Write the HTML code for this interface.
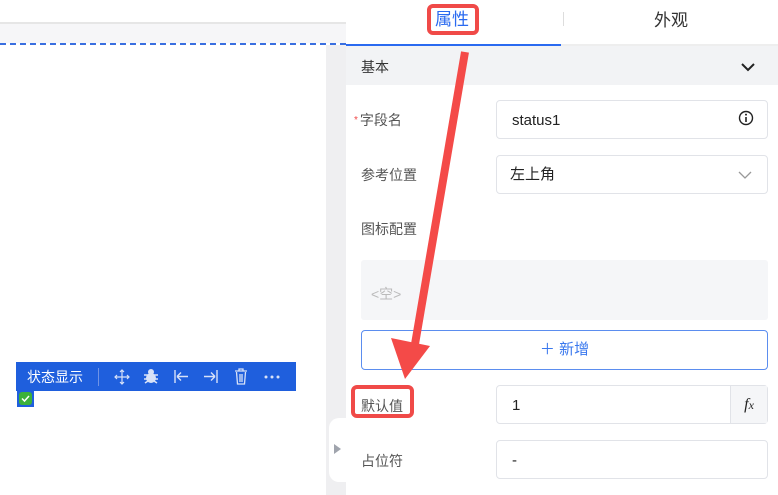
<!DOCTYPE html>
<html><head><meta charset="utf-8"><style>
*{margin:0;padding:0;box-sizing:border-box}
body{width:778px;height:495px;overflow:hidden;background:#fff;position:relative;font-family:"Liberation Sans","Noto Sans CJK SC",sans-serif;font-size:14px;color:#333}
.a{position:absolute}
.inp{position:absolute;left:496px;width:272px;height:39px;border:1px solid #e1e3e8;border-radius:4px;background:#fff}
.lbl{position:absolute;left:361px;color:#555;font-size:14px;line-height:18px}
</style></head><body>
<div class="a" style="left:0;top:22px;width:346px;height:2px;background:#e6e6e6"></div>
<div class="a" style="left:0;top:24px;width:346px;height:19px;background:#f6f6f8"></div>
<div class="a" style="left:0;top:43px;width:346px;height:2px;border-top:2px dashed #3a6fe0"></div>
<div class="a" style="left:326px;top:45px;width:20px;height:450px;background:#efeff1"></div>
<div class="a" style="left:329px;top:418px;width:20px;height:64px;background:#fff;border-radius:10px 0 0 10px"></div>
<div class="a" style="left:334px;top:444px;width:0;height:0;border-left:7px solid #a0a4ad;border-top:5px solid transparent;border-bottom:5px solid transparent"></div>

<div class="a" style="left:16px;top:362px;width:280px;height:29px;background:#1f5fdd;color:#fff;font-size:14px">
<span class="a" style="left:11px;top:6px;line-height:18px">状态显示</span>
<span class="a" style="left:82px;top:6px;width:1px;height:18px;background:#6f93e6"></span>
<svg class="a" style="left:98px;top:7px" width="16" height="16" viewBox="0 0 16 16"><path d="M8 1v14M1 8h14M6 3l2-2 2 2M6 13l2 2 2-2M3 6L1 8l2 2M13 6l2 2-2 2" stroke="#d8e2f8" stroke-width="1.2" fill="none"/></svg>
<svg class="a" style="left:127px;top:6px" width="16" height="16" viewBox="0 0 16 16"><ellipse cx="8" cy="10" rx="5" ry="5" fill="#d8e2f8"/><circle cx="8" cy="4" r="3" fill="#d8e2f8"/><path d="M1 7h14M1 11h14M2 15l3-2M14 15l-3-2" stroke="#d8e2f8" stroke-width="1.5"/></svg>
<svg class="a" style="left:157px;top:8px" width="16" height="14"><path d="M2 0v13M4 6.5h11M4 6.5l4-4M4 6.5l4 4" stroke="#d8e2f8" stroke-width="1.4" fill="none"/></svg>
<svg class="a" style="left:187px;top:8px" width="16" height="14"><path d="M14 0v13M1 6.5h11M12 6.5l-4-4M12 6.5l-4 4" stroke="#d8e2f8" stroke-width="1.4" fill="none"/></svg>
<svg class="a" style="left:218px;top:6px" width="14" height="17"><path d="M1 3h12M5 3V1h4v2M2.5 4l1 12h7l1-12M6 6v8M8 6v8" stroke="#d8e2f8" stroke-width="1.3" fill="none"/></svg>
<svg class="a" style="left:248px;top:13px" width="16" height="4"><circle cx="2" cy="2" r="1.5" fill="#d8e2f8"/><circle cx="8" cy="2" r="1.5" fill="#d8e2f8"/><circle cx="14" cy="2" r="1.5" fill="#d8e2f8"/></svg>
</div>
<div class="a" style="left:17px;top:391px;width:17px;height:16px;background:#1f5fdd"></div>
<div class="a" style="left:19px;top:392px;width:13px;height:13px;background:#3cb13a;border-radius:3px"></div>
<svg class="a" style="left:19px;top:392px" width="13" height="13"><path d="M3 6.5l2.5 2.5 4.5-5" stroke="#fff" stroke-width="1.5" fill="none"/></svg>

<div class="a" style="left:346px;top:0;width:432px;height:495px;background:#fff"></div>
<div class="a" style="left:435px;top:10px;font-size:17px;color:#2a6af0;line-height:20px">属性</div>
<div class="a" style="left:654px;top:11px;font-size:17px;color:#333;line-height:20px">外观</div>
<div class="a" style="left:563px;top:12px;width:1px;height:14px;background:#ddd"></div>
<div class="a" style="left:346px;top:44px;width:432px;height:2px;background:#eee"></div>
<div class="a" style="left:346px;top:44px;width:215px;height:2px;background:#2a6af0"></div>
<div class="a" style="left:346px;top:46px;width:432px;height:39px;background:#f2f3f5"></div>
<div class="a" style="left:361px;top:58px;color:#333;line-height:18px">基本</div>
<svg class="a" style="left:741px;top:63px" width="14" height="9"><path d="M1 1l6 6 6-6" stroke="#222" stroke-width="2" fill="none"/></svg>

<div class="lbl" style="top:111px"><span style="color:#f04848;font-size:10px;position:relative;left:-7px;top:-2px">*</span><span style="margin-left:-5px">字段名</span></div>
<div class="inp" style="top:100px"><span class="a" style="left:15px;top:11px;font-size:15px;color:#222;line-height:18px">status1</span>
<svg class="a" style="left:241px;top:9px" width="16" height="16"><circle cx="8" cy="8" r="6.5" stroke="#222" stroke-width="1.4" fill="none"/><path d="M8 7v5" stroke="#222" stroke-width="1.6"/><circle cx="8" cy="4.6" r="1" fill="#222"/></svg></div>
<div class="lbl" style="top:166px">参考位置</div>
<div class="inp" style="top:155px"><span class="a" style="left:13px;top:10px;font-size:15px;color:#222;line-height:18px">左上角</span>
<svg class="a" style="left:241px;top:15px" width="14" height="8"><path d="M1 1l6 6 6-6" stroke="#999" stroke-width="1.3" fill="none"/></svg></div>
<div class="lbl" style="top:220px">图标配置</div>
<div class="a" style="left:361px;top:260px;width:407px;height:60px;background:#f5f6f8;border-radius:3px"></div>
<div class="a" style="left:371px;top:285px;color:#bbb;font-size:14px;line-height:18px">&lt;空&gt;</div>
<div class="a" style="left:361px;top:330px;width:407px;height:40px;border:1px solid #5b8def;border-radius:4px;color:#3a78ee;text-align:center;line-height:38px;font-size:15px">＋ 新增</div>
<div class="lbl" style="top:397px">默认值</div>
<div class="inp" style="top:385px"><span class="a" style="left:15px;top:11px;font-size:15px;color:#222;line-height:18px">1</span>
<div class="a" style="left:233px;top:0;width:37px;height:37px;background:#f5f6f8;border-left:1px solid #e1e3e8;font-family:'Liberation Serif',serif;font-style:italic;font-size:16px;text-align:center;line-height:37px;color:#222">f<span style="font-size:12px">x</span></div></div>
<div class="lbl" style="top:452px">占位符</div>
<div class="inp" style="top:440px"><span class="a" style="left:15px;top:11px;font-size:15px;color:#222;line-height:18px">-</span></div>

<div class="a" style="left:427px;top:4px;width:52px;height:31px;border:4px solid #f04a48;border-radius:6px"></div>
<div class="a" style="left:351px;top:385px;width:63px;height:33px;border:4px solid #f04a48;border-radius:6px"></div>
<svg class="a" style="left:0;top:0" width="778" height="495"><path d="M465 52L414 350" stroke="#f44a48" stroke-width="8"/><path d="M391 338L405 379L430 346Z" fill="#f44a48"/></svg>
</body></html>
